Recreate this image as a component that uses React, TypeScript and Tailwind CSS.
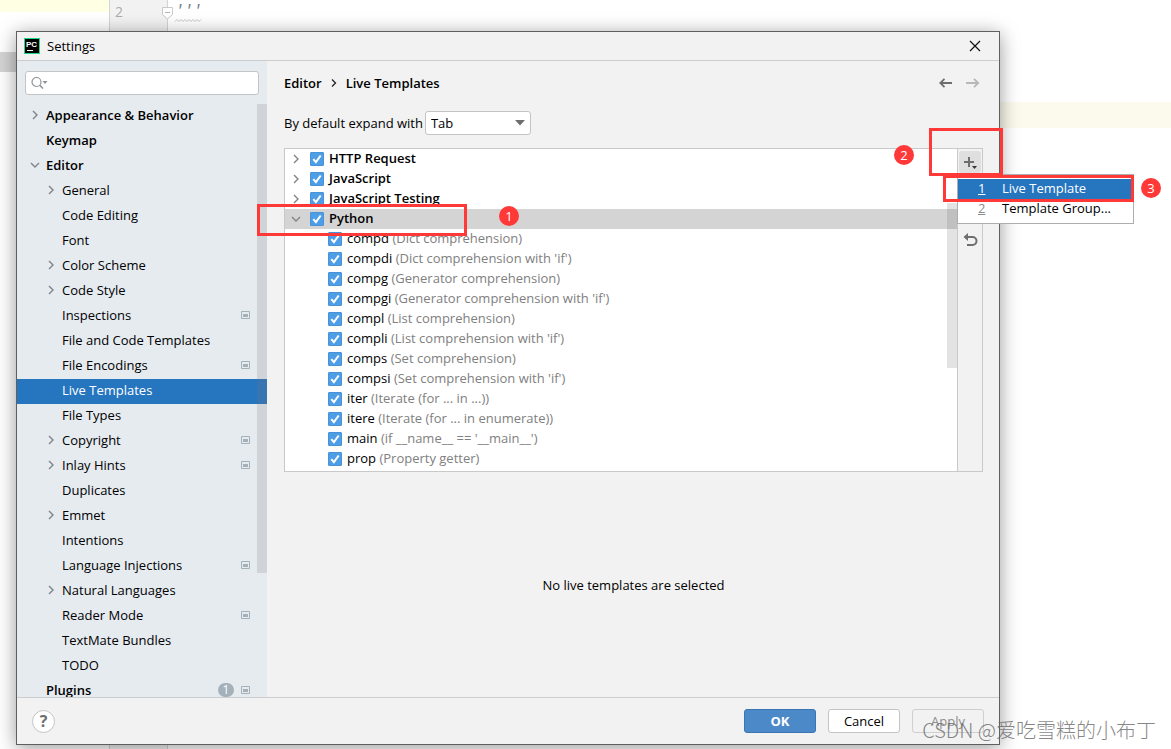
import { ReactNode } from "react";

type TreeItem = {
  label: string;
  level: number;
  arrow?: "right" | "down";
  project?: boolean;
  selected?: boolean;
  badge?: number;
};

const treeItems: TreeItem[] = [
  { label: "Appearance & Behavior", level: 0, arrow: "right" },
  { label: "Keymap", level: 0 },
  { label: "Editor", level: 0, arrow: "down" },
  { label: "General", level: 1, arrow: "right" },
  { label: "Code Editing", level: 1 },
  { label: "Font", level: 1 },
  { label: "Color Scheme", level: 1, arrow: "right" },
  { label: "Code Style", level: 1, arrow: "right" },
  { label: "Inspections", level: 1, project: true },
  { label: "File and Code Templates", level: 1 },
  { label: "File Encodings", level: 1, project: true },
  { label: "Live Templates", level: 1, selected: true },
  { label: "File Types", level: 1 },
  { label: "Copyright", level: 1, arrow: "right", project: true },
  { label: "Inlay Hints", level: 1, arrow: "right", project: true },
  { label: "Duplicates", level: 1 },
  { label: "Emmet", level: 1, arrow: "right" },
  { label: "Intentions", level: 1 },
  { label: "Language Injections", level: 1, project: true },
  { label: "Natural Languages", level: 1, arrow: "right" },
  { label: "Reader Mode", level: 1, project: true },
  { label: "TextMate Bundles", level: 1 },
  { label: "TODO", level: 1 },
  { label: "Plugins", level: 0, project: true, badge: 1 },
];

const groups = ["HTTP Request", "JavaScript", "JavaScript Testing"];

const pythonTemplates = [
  { key: "compd", description: "(Dict comprehension)" },
  { key: "compdi", description: "(Dict comprehension with 'if')" },
  { key: "compg", description: "(Generator comprehension)" },
  { key: "compgi", description: "(Generator comprehension with 'if')" },
  { key: "compl", description: "(List comprehension)" },
  { key: "compli", description: "(List comprehension with 'if')" },
  { key: "comps", description: "(Set comprehension)" },
  { key: "compsi", description: "(Set comprehension with 'if')" },
  { key: "iter", description: "(Iterate (for ... in ...))" },
  { key: "itere", description: "(Iterate (for ... in enumerate))" },
  { key: "main", description: "(if __name__ == '__main__')" },
  { key: "prop", description: "(Property getter)" },
];

const Chevron = ({ open }: { open?: boolean }) => (
  <svg width="10" height="10" viewBox="0 0 10 10" fill="none" stroke="#7f8487" strokeWidth="1.4" className="shrink-0">
    {open ? <path d="M1 3l4 4 4-4" /> : <path d="M3 1l4 4-4 4" />}
  </svg>
);

const ProjectIcon = () => (
  <svg width="9" height="8" viewBox="0 0 9 8" className="shrink-0">
    <path d="M.5.5h8v7h-8z" fill="none" stroke="#a5b1ba" />
    <path d="M2 3h5v3H2z" fill="#a5b1ba" />
  </svg>
);

const Check = ({ label }: { label: string }) => (
  <span className="relative flex size-[14px] shrink-0">
    <input
      type="checkbox"
      defaultChecked
      aria-label={label}
      className="peer size-[14px] appearance-none rounded-[1px] border border-[#4a92d8] checked:bg-[#4e9de7]"
    />
    <svg
      viewBox="0 0 14 14"
      fill="none"
      stroke="white"
      strokeWidth="2"
      className="pointer-events-none absolute inset-0 hidden peer-checked:block"
    >
      <path d="M3.3 7.2l2.6 2.9 4.8-6.6" />
    </svg>
  </span>
);

const Marker = ({ n, className }: { n: number; className: string }) => (
  <span
    className={`pointer-events-none absolute flex size-5 items-center justify-center rounded-full bg-[#ff3838] font-normal text-white ${className}`}
  >
    {n}
  </span>
);

const Outline = ({ className }: { className: string }) => (
  <span className={`pointer-events-none absolute border-3 border-[#ff3838] ${className}`} />
);

const GroupRow = ({ label, open, children }: { label: string; open?: boolean; children?: ReactNode }) => (
  <li className={`relative flex h-5 items-center pl-[6px] ${open ? "z-10 bg-[#d4d4d4]" : ""}`}>
    <Chevron open={open} />
    <span className="ml-[9px]">
      <Check label={label} />
    </span>
    <span className="ml-[5px] pb-0.5 font-semibold">{label}</span>
    {children}
  </li>
);

const EditorBackdrop = () => (
  <div className="absolute inset-0 flex overflow-hidden bg-white">
    <div className="w-[109px] shrink-0">
      <div className="h-3 bg-[#ffffe4]" />
      <div className="mt-10 h-5 bg-[#d4d4d4]" />
    </div>
    <div className="w-[59px] shrink-0 border-x border-[#d4d4d4] bg-[#f2f2f2] pl-[5px] text-[14px] leading-6 text-[#adadad]">
      2
    </div>
    <div className="relative flex-1">
      <div className="pl-[7px] font-['Liberation_Mono'] text-[15px] italic leading-6 text-[#6f7b8a]">'''</div>
      <svg width="44" height="32" viewBox="0 0 44 32" fill="none" className="absolute -left-[7px] top-0">
        <path d="M1.5 7.5h10v7l-5 4.500-5-4.500z" fill="white" stroke="#c9c9c9" />
        <path d="M4 12.500h5" stroke="#b5b5b5" />
        <path d="M14 21.500l2-2 2 2 2-2 2 2 2-2 2 2 2-2 2 2 2-2 2 2 2-2 2 2 2-2" stroke="#c4c4c4" />
      </svg>
      <div className="absolute inset-x-0 top-[102px] h-[26px] bg-[#fcfaed]" />
    </div>
  </div>
);

const Sidebar = () => (
  <aside className="flex w-[250px] shrink-0 flex-col bg-[#e6ebf0] pt-[10px]">
    <label className="mx-2 flex h-6 shrink-0 items-center rounded-[3px] border border-[#c4c4c4] bg-white pl-[5px]">
      <svg width="17" height="14" viewBox="0 0 17 14" fill="none" stroke="#8f9499" strokeWidth="1.2" className="shrink-0">
        <circle cx="5.500" cy="6" r="4.500" />
        <path d="M8.700 9.200l3.300 3.300" strokeWidth="1.600" />
        <path d="M11.500 5h5l-2.500 3z" fill="#8f9499" stroke="none" />
      </svg>
      <input type="text" aria-label="Search settings" className="min-w-0 flex-1 px-1 outline-none" />
    </label>
    <nav className="relative mt-[9px] min-h-0 flex-1 overflow-hidden">
      <ul>
        {treeItems.map((item) => (
          <li
            key={item.label}
            className={`flex h-[25px] items-center pb-1 pr-[17px] ${item.level === 0 ? "pl-[13px] font-semibold" : "pl-[29px]"} ${
              item.selected ? "bg-[#2675bf] text-white" : ""
            }`}
          >
            <span className="w-4 shrink-0">{item.arrow && <Chevron open={item.arrow === "down"} />}</span>
            <a href="#" className="flex-1">
              {item.label}
            </a>
            {item.badge && (
              <span className="mr-[7px] flex h-[14px] w-4 items-center justify-center rounded-full bg-[#a5b1ba] text-[12px] font-normal text-white">
                {item.badge}
              </span>
            )}
            {item.project && <ProjectIcon />}
          </li>
        ))}
      </ul>
      <div className="absolute right-0 top-0 h-[469px] w-[10px] bg-[#787878]/20" />
    </nav>
  </aside>
);

const AddMenu = () => (
  <div className="absolute -left-px top-[25px] z-20 w-[177px] border border-[#adadad] bg-white py-1">
    <button type="button" className="flex h-5 w-full items-center bg-[#2675bf] pb-0.5 pl-5 text-white">
      <span className="w-6 text-left underline">1</span>
      Live Template
    </button>
    <button type="button" className="flex h-5 w-full items-center pb-0.5 pl-5">
      <span className="w-6 text-left text-[#8c8c8c] underline">2</span>
      Template Group...
    </button>
    <Outline className="-left-[15px] -right-px top-0 h-[27px]" />
    <Marker n={3} className="-right-[28px] top-[3px]" />
  </div>
);

const TemplateList = () => (
  <div className="mt-[13px] flex h-[324px] border border-[#c9c9c9] bg-white">
    <div className="relative min-w-0 flex-1">
      <ul>
        {groups.map((group) => (
          <GroupRow key={group} label={group} />
        ))}
        <GroupRow label="Python" open>
          <Outline className="-left-7 -top-[5px] h-8 w-[210px]" />
          <Marker n={1} className="left-[214px] -top-[3px]" />
        </GroupRow>
        {pythonTemplates.map((template) => (
          <li key={template.key} className="flex h-5 items-center pl-[43px]">
            <Check label={template.key} />
            <span className="ml-[5px] whitespace-pre pb-0.5">
              {template.key} <span className="text-[#808080]">{template.description}</span>
            </span>
          </li>
        ))}
      </ul>
      <div className="absolute right-0 top-[54px] z-10 h-[165px] w-[10px] bg-[#737373]/20" />
    </div>
    <div className="relative flex w-[25px] shrink-0 flex-col items-center gap-[57px] border-l border-[#c9c9c9] bg-[#f2f2f2] pt-[2px]">
      <button type="button" aria-label="Add" className="flex size-[22px] items-center justify-center rounded-[3px] bg-[#dfdfdf]">
        <svg width="16" height="16" viewBox="0 0 16 16">
          <path d="M6 3h2v4h4v2H8v4H6V9H2V7h4z" fill="#6e6e6e" />
          <path d="M10 12h5l-2.500 3z" fill="#333" />
        </svg>
      </button>
      <button type="button" aria-label="Revert" className="flex h-5 items-center justify-center">
        <svg width="16" height="16" viewBox="0 0 16 16" fill="none" stroke="#6e6e6e" strokeWidth="2">
          <path d="M4 5h6.500a3.500 3.500 0 0 1 0 8H5" />
          <path d="M6 1v8L1.500 5z" fill="#6e6e6e" stroke="none" />
        </svg>
      </button>
      <AddMenu />
      <Outline className="-left-[29px] -top-[21px] z-20 h-12 w-[74px]" />
      <Marker n={2} className="-left-16 -top-1" />
    </div>
  </div>
);

const App = () => {
  return (
    <main className="relative flex h-screen min-h-[600px] pb-1 pl-4 pr-[171px] pt-[31px] font-['Open_Sans','Noto_Sans_CJK_SC',sans-serif] text-[13px] leading-5 text-black">
      <EditorBackdrop />

      <section className="relative flex min-w-0 flex-1 flex-col border border-[#5f5f5f] bg-[#f2f2f2] shadow-[0_3px_18px_rgba(0,0,0,0.4)]">
        {/* Title bar */}
        <header className="flex h-[29px] shrink-0 items-center border-b border-[#cdcdcd] pl-[7px] pr-[18px]">
          <svg width="16" height="16" viewBox="0 0 16 16">
            <path d="M0 0h16v16H0z" fill="#21d789" />
            <path d="M1 1h14v14H1z" fill="black" />
            <path d="M3 12.500h6" stroke="white" />
            <text x="2" y="9" fill="white" fontSize="8" fontWeight="700" fontFamily="Liberation Sans">
              PC
            </text>
          </svg>
          <h1 className="ml-[7px] flex-1">Settings</h1>
          <button type="button" aria-label="Close">
            <svg width="12" height="12" viewBox="0 0 12 12" stroke="#111" strokeWidth="1.200">
              <path d="M1 1l10 10M11 1L1 11" />
            </svg>
          </button>
        </header>

        <div className="flex min-h-0 flex-1">
          <Sidebar />
          <div className="flex min-w-0 flex-1 flex-col pl-[17px] pr-4 pt-3">
            <div className="flex h-5 items-center font-semibold">
              <span>Editor</span>
              <svg width="6" height="8" viewBox="0 0 6 8" fill="none" stroke="#222" strokeWidth="1.300" className="mx-[9px]">
                <path d="M1 .5L4.500 4 1 7.500" />
              </svg>
              <span className="flex-1">Live Templates</span>
              <button type="button" aria-label="Back" className="mr-[13px]">
                <svg width="14" height="10" viewBox="0 0 14 10" fill="none" stroke="#6e6e6e" strokeWidth="1.800">
                  <path d="M13 5H1.500M5.500 .8L1.300 5l4.200 4.200" />
                </svg>
              </button>
              <button type="button" aria-label="Forward" className="mr-[3px]" disabled>
                <svg width="14" height="10" viewBox="0 0 14 10" fill="none" stroke="#b8b8b8" strokeWidth="1.800">
                  <path d="M0 5h12M8 .8L12.200 5 8 9.200" />
                </svg>
              </button>
            </div>

            <div className="mt-[18px] flex h-6 items-center gap-0.5">
              <label htmlFor="expand-key" className="whitespace-nowrap">
                By default expand with
              </label>
              <div className="relative">
                <select
                  id="expand-key"
                  className="h-6 w-[106px] appearance-none rounded-[3px] border border-[#c4c4c4] bg-white pl-[5px]"
                >
                  <option>Tab</option>
                </select>
                <svg width="10" height="6" viewBox="0 0 10 6" className="pointer-events-none absolute right-1.5 top-[9px]">
                  <path d="M0 0h10L5 5.500z" fill="#6e6e6e" />
                </svg>
              </div>
            </div>

            <TemplateList />

            <div className="flex flex-1 items-center justify-center">No live templates are selected</div>
          </div>
        </div>

        {/* Buttons */}
        <footer className="flex h-[47px] shrink-0 items-center gap-3 border-t border-[#cdcdcd] pl-[15px] pr-[15px]">
          <button
            type="button"
            aria-label="Help"
            className="flex size-[23px] items-center justify-center rounded-full border border-[#c4c4c4] bg-white text-[16px] font-bold text-[#6e6e6e]"
          >
            ?
          </button>
          <span className="flex-1" />
          <button type="button" className="h-6 w-[72px] rounded-[3px] border border-[#3d75b2] bg-[#4c89c8] font-bold text-white">
            OK
          </button>
          <button type="button" className="h-6 w-[72px] rounded-[3px] border border-[#c4c4c4] bg-white">
            Cancel
          </button>
          <button type="button" disabled className="h-6 w-[72px] rounded-[3px] border border-[#cfcfcf] text-[#8c8c8c]">
            Apply
          </button>
        </footer>
      </section>

      <div className="pointer-events-none absolute bottom-1 right-[15px] font-['Noto_Sans_CJK_SC',sans-serif] text-[20px] font-light leading-[30px] text-[#666666]/80">
        CSDN @爱吃雪糕的小布丁
      </div>
    </main>
  );
};

export default App;
